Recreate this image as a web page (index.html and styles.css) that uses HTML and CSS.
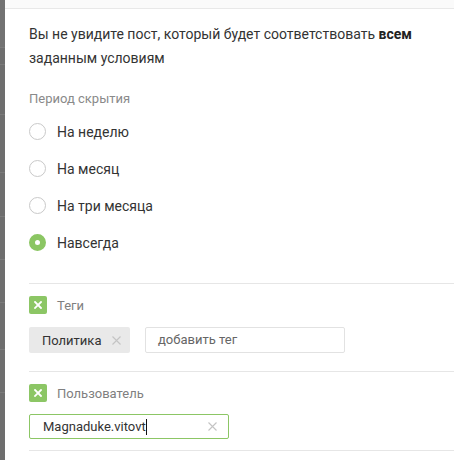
FILE: index.html
```html
<!DOCTYPE html>
<html lang="ru">
<head>
<meta charset="utf-8">
<link rel="stylesheet" href="styles.css">
</head>
<body>
<div class="app">
  <div class="backdrop">
    <div class="bd-row h48"></div>
    <div class="bd-row h17"></div>
    <div class="bd-row h50"></div>
    <div class="bd-row h58"></div>
    <div class="bd-row h44"></div>
    <div class="bd-row h43"></div>
    <div class="bd-row h43"></div>
    <div class="bd-row h47"></div>
    <div class="bd-row h43"></div>
  </div>
  <div class="modal">
    <div class="modal-top"></div>
    <div class="body">
      <p class="intro">Вы не увидите пост, который будет соответствовать <b>всем</b> заданным условиям</p>
      <div class="caption">Период скрытия</div>
      <div class="radios">
        <div class="radio-row"><span class="radio"></span><span class="radio-label">На неделю</span></div>
        <div class="radio-row"><span class="radio"></span><span class="radio-label">На месяц</span></div>
        <div class="radio-row"><span class="radio"></span><span class="radio-label">На три месяца</span></div>
        <div class="radio-row"><span class="radio checked"></span><span class="radio-label">Навсегда</span></div>
      </div>
    </div>
    <div class="section tags">
      <div class="check-row">
        <span class="checkbox"><svg width="8" height="8" viewBox="0 0 8 8"><path d="M1 1L7 7M7 1L1 7" stroke="#fff" stroke-width="1.8" stroke-linecap="square"/></svg></span>
        <span class="check-label">Теги</span>
      </div>
      <div class="field-row">
        <span class="chip">Политика<svg class="x" width="9" height="9" viewBox="0 0 9 9"><path d="M0.5 0.5L8.5 8.5M8.5 0.5L0.5 8.5" stroke="#c4c4c4" stroke-width="1.1"/></svg></span>
        <span class="input placeholder">добавить тег</span>
      </div>
    </div>
    <div class="section user">
      <div class="check-row">
        <span class="checkbox"><svg width="8" height="8" viewBox="0 0 8 8"><path d="M1 1L7 7M7 1L1 7" stroke="#fff" stroke-width="1.8" stroke-linecap="square"/></svg></span>
        <span class="check-label">Пользователь</span>
      </div>
      <div class="field-row">
        <span class="input active"><span class="value">Magnaduke.vitovt</span><span class="caret"></span><svg class="clear" width="9" height="9" viewBox="0 0 9 9"><path d="M0.5 0.5L8.5 8.5M8.5 0.5L0.5 8.5" stroke="#c4c4c4" stroke-width="1.1"/></svg></span>
      </div>
    </div>
    <div class="section last"></div>
  </div>
</div>
</body>
</html>
```

FILE: styles.css
```css
html, body {
  margin: 0;
  padding: 0;
  background: #fff;
}
body {
  font-family: Roboto, "Liberation Sans", sans-serif;
  color: #333;
  width: 454px;
  height: 460px;
  overflow: hidden;
}
.app {
  display: flex;
  height: 460px;
}
.backdrop {
  width: 5px;
  flex: none;
  background: #6e6e6e;
  display: flex;
  flex-direction: column;
}
.bd-row {
  flex: none;
  box-sizing: border-box;
  border-bottom: 1px solid #7b7b7b;
}
.h48 { height: 48px; background: #727272; }
.h17 { height: 17px; }
.h50 { height: 50px; }
.h58 { height: 58px; }
.h44 { height: 44px; }
.h43 { height: 43px; }
.h47 { height: 47px; }
.modal {
  flex: 1;
  display: flex;
  flex-direction: column;
}
.modal-top {
  height: 8px;
  background: #fafafa;
  border-bottom: 1px solid #e8e8e8;
  flex: none;
}
.body {
  padding-left: 24px;
}
.intro {
  margin: 13px 0 0;
  font-size: 14px;
  line-height: 24px;
  color: #333;
  width: 400px;
}
.intro b {
  font-weight: 700;
  color: #222;
}
.caption {
  margin-top: 21px;
  font-size: 13px;
  line-height: 16px;
  color: #8a8a8a;
}
.radios {
  margin-top: 6px;
  display: flex;
  flex-direction: column;
}
.radio-row {
  height: 37px;
  display: flex;
  align-items: center;
}
.radio {
  width: 17px;
  height: 17px;
  box-sizing: border-box;
  border-radius: 50%;
  border: 1px solid #c9c9c9;
  background: #fff;
  flex: none;
}
.radio.checked {
  border: 6px solid #8bc663;
}
.radio-label {
  margin-left: 11px;
  font-size: 14px;
  color: #333;
}
.section {
  margin-left: 24px;
  border-top: 1px solid #e6e6e6;
}
.tags {
  margin-top: 22px;
  padding: 12px 0 18px;
}
.user {
  padding: 12px 0 11px;
}
.last {
  flex: 1;
}
.check-row {
  display: flex;
  align-items: center;
  height: 18px;
}
.checkbox {
  width: 18px;
  height: 18px;
  border-radius: 2px;
  background: #8cc665;
  display: flex;
  align-items: center;
  justify-content: center;
  flex: none;
}
.check-label {
  margin-left: 10px;
  font-size: 13px;
  color: #808080;
}
.field-row {
  display: flex;
  align-items: center;
  margin-top: 13px;
}
.user .field-row {
  margin-top: 12px;
}
.chip {
  width: 101px;
  height: 26px;
  box-sizing: border-box;
  background: #e9e9e9;
  border-radius: 2px;
  padding-left: 13px;
  display: flex;
  align-items: center;
  font-size: 13px;
  color: #333;
}
.chip .x {
  margin-left: 11px;
}
.input {
  box-sizing: border-box;
  width: 200px;
  height: 26px;
  border: 1px solid #e2e2e2;
  border-radius: 2px;
  display: flex;
  align-items: center;
  padding-left: 12px;
  font-size: 13px;
}
.placeholder {
  margin-left: 15px;
  margin-top: -1px;
  color: #666;
}
.input.active {
  height: 25px;
  border-color: #8cc665;
  color: #333;
  padding-left: 13px;
}
.caret {
  width: 1px;
  height: 16px;
  background: #111;
}
.clear {
  margin-left: auto;
  margin-right: 11px;
}
```
